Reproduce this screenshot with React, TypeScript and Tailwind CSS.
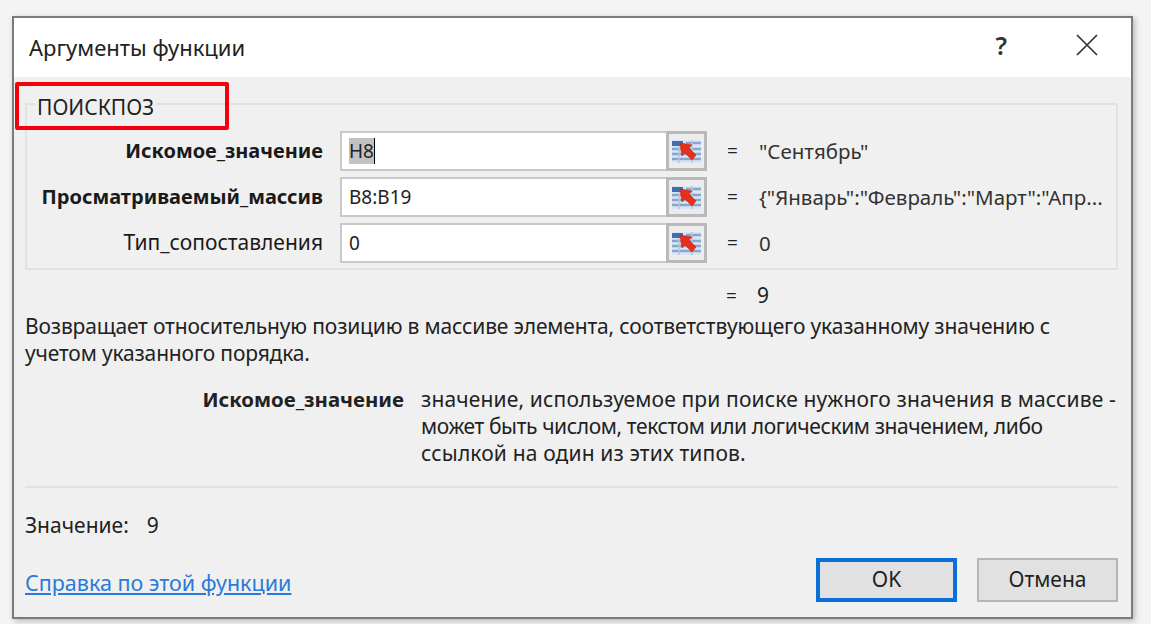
const font = { fontFamily: '"Noto Sans", "Open Sans", sans-serif' };

const args = [
  { label: "Искомое_значение", bold: true, value: "H8", result: "\"Сентябрь\"", selected: true },
  { label: "Просматриваемый_массив", bold: true, value: "B8:B19", result: "{\"Январь\":\"Февраль\":\"Март\":\"Апр...", selected: false },
  { label: "Тип_сопоставления", bold: false, value: "0", result: "0", selected: false },
];

function RefIcon() {
  return (
    <svg width="31" height="27" viewBox="0 0 31 27">
      <rect x="1" y="2" width="29" height="23" fill="#dbe5f1" />
      <rect x="1" y="3" width="11" height="5" fill="#3f6fae" />
      <path d="M15 5h15M1 11h29M1 16h29M1 21h29" stroke="#86a6d0" strokeWidth="2.4" fill="none" />
      <path d="M8 8v17M21 2v23" stroke="#b4c6de" strokeWidth="1.5" fill="none" />
      <path d="M9 5l12 2-3 3 7 7-4 5-7-7-3 3z" fill="#e5301c" stroke="#c4240f" strokeWidth="0.6" />
    </svg>
  );
}

function ArgRow({ label, bold, value, result, selected }: (typeof args)[number]) {
  return (
    <div className="flex items-center h-[40px]">
      <div className={`w-[296px] text-right text-[#1a1a1a] whitespace-nowrap ${bold ? "font-bold text-[20px]" : "text-[21px]"}`}>
        {label}
      </div>
      <div className="ml-[17px] w-[326px] h-full bg-white border-2 border-[#c8c8c8] border-r-0 flex items-center pl-[7px] text-[19px] text-[#222] whitespace-nowrap">
        {selected ? (
          <>
            <span className="bg-[#c2c2c2] leading-[26px]">{value}</span>
            <span className="w-px h-[26px] bg-black" />
          </>
        ) : (
          value
        )}
      </div>
      <div className="w-[41px] h-full bg-[#ececec] border-[3px] border-[#b9b9b9] flex items-center justify-center">
        <RefIcon />
      </div>
      <div className="ml-[20px] w-[32px] text-[19px] text-[#222]">=</div>
      <div className="text-[20.5px] text-[#333] whitespace-nowrap">{result}</div>
    </div>
  );
}

export default function App() {
  return (
    <div className="w-[1151px] h-[624px] overflow-hidden bg-[#f4f4f4] pt-[16px] pl-[12px]" style={font}>
      <div className="relative w-[1121px] h-[603px] flex flex-col border-2 border-[#7a7a7a] bg-[#f0f0f0] shadow-[2px_2px_6px_rgba(0,0,0,0.25)]">
        <div className="h-[59px] shrink-0 bg-white flex items-center pl-[15px] pr-[33px]">
          <div className="text-[22px] text-[#222]">Аргументы функции</div>
          <div className="ml-auto text-[25px] text-[#333] font-semibold mr-[69px] mt-[-4px]">?</div>
          <svg width="22" height="22" viewBox="0 0 22 22" className="mt-[-5px]">
            <path d="M1 1l20 20M21 1L1 21" stroke="#333" strokeWidth="1.7" fill="none" />
          </svg>
        </div>

        <div className="flex-1 flex flex-col pl-[11px] pr-[13px] pt-[26px]">
          <fieldset className="h-[167px] border-2 border-[#e2e2e2] pt-[26px] flex flex-col gap-[6px] relative">
            <div className="absolute left-[8px] top-[-11px] px-[2px] bg-[#f0f0f0] text-[21px] text-[#222] leading-[26px]">
              ПОИСКПОЗ
            </div>
            {args.map((a) => (
              <ArgRow key={a.label} {...a} />
            ))}
          </fieldset>

          <div className="mt-[12px] pl-[701px] text-[21px] text-[#222] leading-[26px]">
            <span className="inline-block w-[31px] text-[19px]">=</span>9
          </div>

          <p className="mt-[4px] text-[21px] tracking-[-0.16px] leading-[27px] text-[#222] w-[1060px]">
            Возвращает относительную позицию в массиве элемента, соответствующего указанному значению с учетом указанного порядка.
          </p>

          <div className="flex mt-[19px]">
            <div className="w-[379px] shrink-0 text-right font-bold text-[20.4px] text-[#222] leading-[27px]">Искомое_значение</div>
            <p className="ml-[17px] whitespace-nowrap text-[21px] tracking-[0.15px] text-[#222] leading-[27px]">
              значение, используемое при поиске нужного значения в массиве -
              <br />
              <span className="tracking-[-0.39px]">может быть числом, текстом или логическим значением, либо</span>
              <br />
              ссылкой на один из этих типов.
            </p>
          </div>

          <div className="mt-[19px] border-t-2 border-[#e2e2e2]" />

          <div className="mt-[24px] text-[21px] text-[#222] leading-[26px]">
            Значение:<span className="ml-[18px]">9</span>
          </div>

          <div className="mt-[20px] flex items-start">
            <a className="mt-[12px] text-[21.5px] leading-[26px] text-[#2a7ad8] underline">Справка по этой функции</a>
            <div className="ml-auto w-[141px] h-[44px] border-[4px] border-[#0a6fd6] bg-[#e1e1e1] flex items-center justify-center text-[21px] text-[#222]">
              OK
            </div>
            <div className="ml-[20px] w-[141px] h-[44px] border-2 border-[#b5b5b5] bg-[#e1e1e1] flex items-center justify-center text-[21px] text-[#222]">
              Отмена
            </div>
          </div>
        </div>

        <div className="absolute left-[1px] top-[64px] w-[214px] h-[48px] border-[4px] border-[#f4000c] rounded-[2px]" />
      </div>
    </div>
  );
}
